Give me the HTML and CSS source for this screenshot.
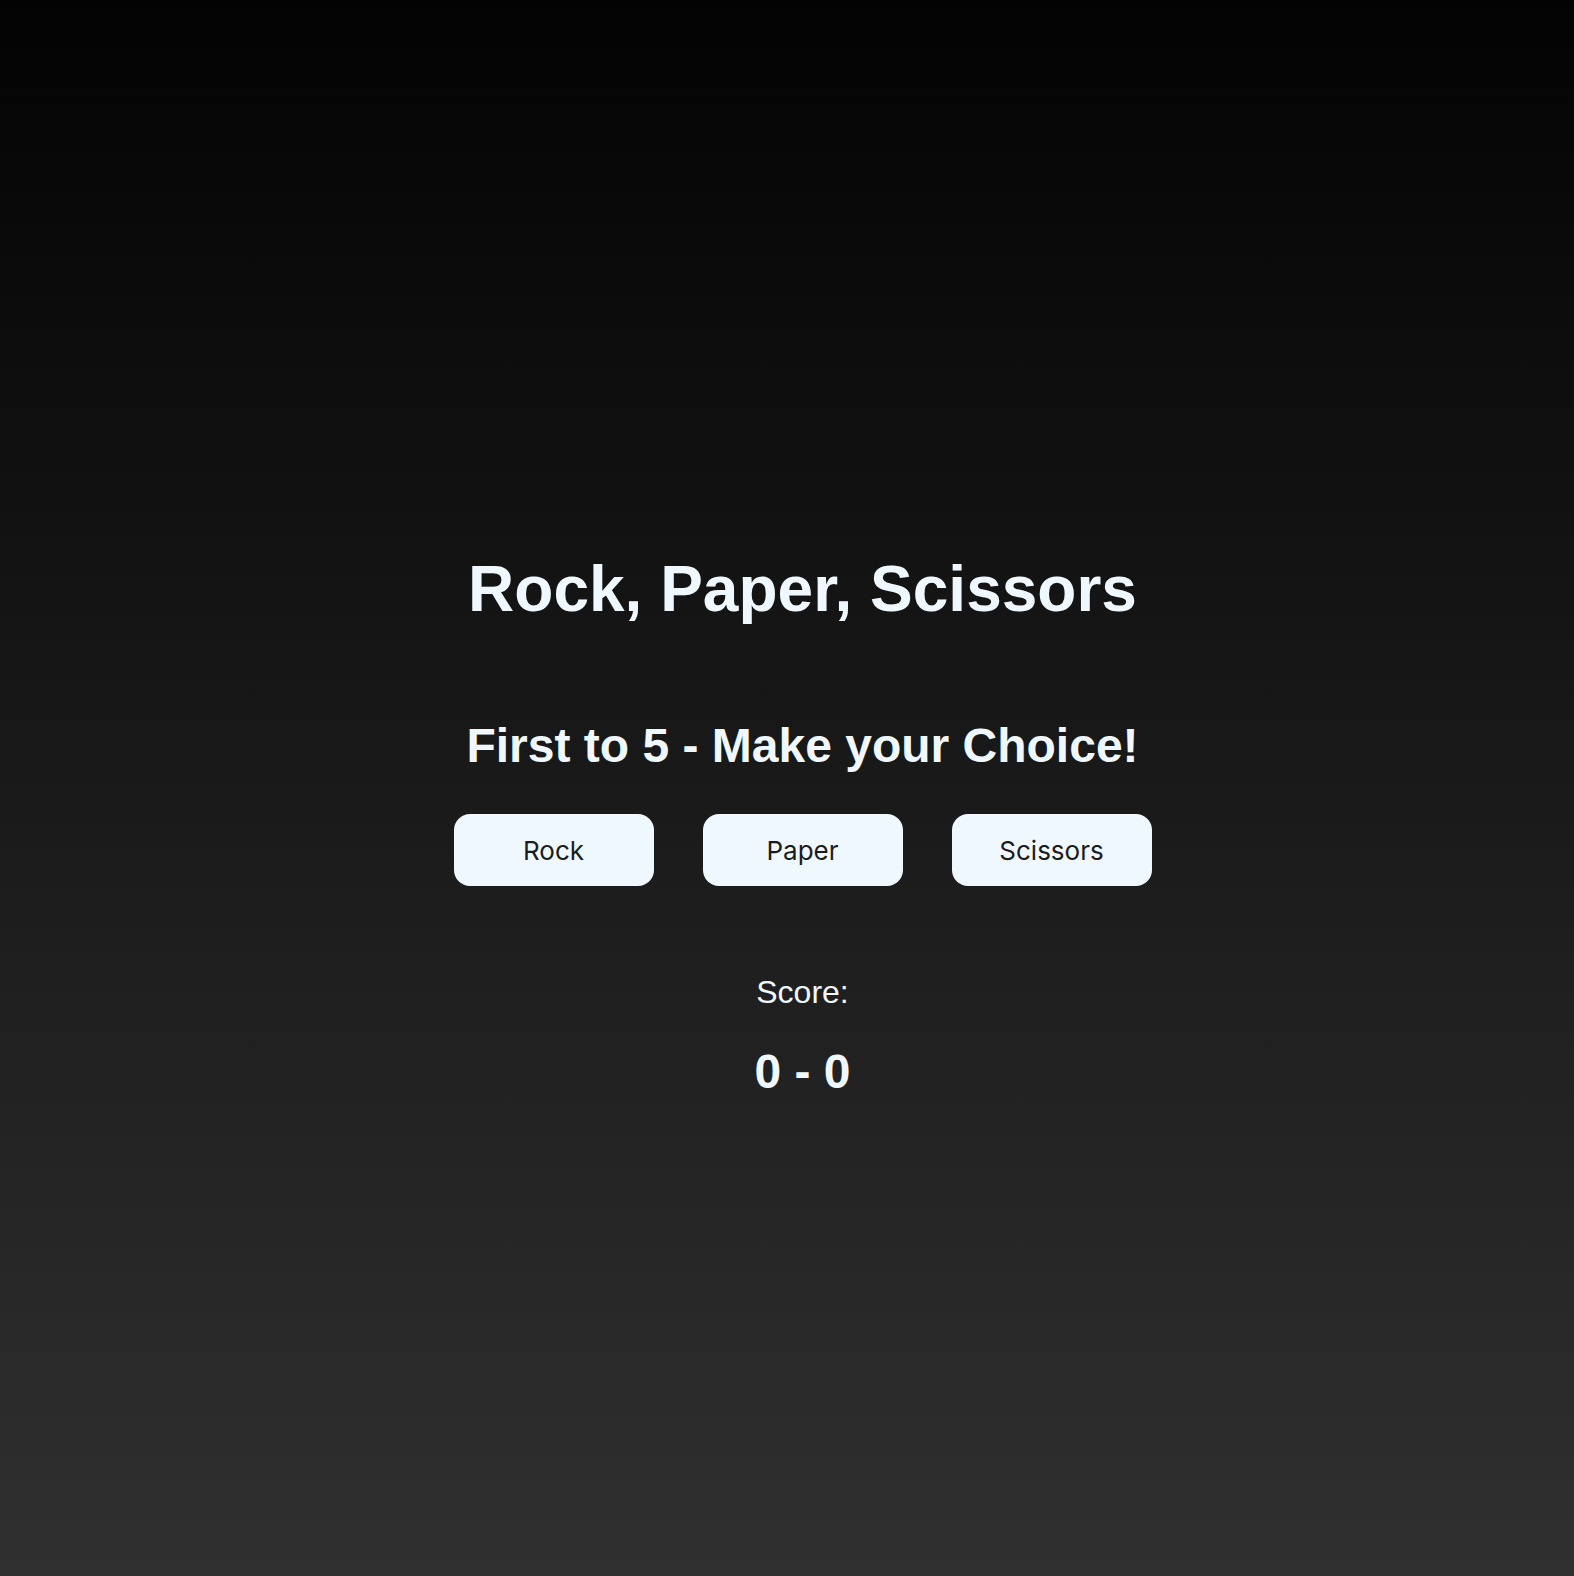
FILE: index.html
```html
<!DOCTYPE html>
<html lang="en">
<head>
<meta charset="utf-8">
<title>Rock, Paper, Scissors</title>
<link rel="stylesheet" href="styles.css">
</head>
<body>
<main class="game">
  <h1 class="title">Rock, Paper, Scissors</h1>
  <h2 class="prompt">First to 5 - Make your Choice!</h2>
  <div class="choices">
    <button class="choice">Rock</button>
    <button class="choice">Paper</button>
    <button class="choice">Scissors</button>
  </div>
  <p class="score-label">Score:</p>
  <p class="score">0 - 0</p>
</main>
</body>
</html>
```
FILE: styles.css
```css
html, body {
  margin: 0;
  padding: 0;
}
body {
  min-height: 1576px;
  background: linear-gradient(to bottom, #030303 0%, #303030 100%);
  font-family: "Liberation Sans", Arial, Helvetica, sans-serif;
  color: #f0f8ff;
}
.game {
  display: flex;
  flex-direction: column;
  align-items: center;
  padding-top: 552px;
  padding-left: 31px;
}
.title {
  margin: 0;
  font-size: 64px;
  font-weight: 700;
  line-height: normal;
}
.prompt {
  margin: 92px 0 0;
  font-size: 48px;
  font-weight: 700;
  line-height: normal;
}
.choices {
  display: flex;
  gap: 49px;
  margin-top: 41px;
}
.choice {
  width: 200px;
  height: 72px;
  border: none;
  border-radius: 16px;
  background: #f0f8ff;
  color: #1c1c1c;
  font-family: Inter, "Noto Sans", sans-serif;
  font-size: 26px;
  cursor: pointer;
}
.score-label {
  margin: 88px 0 0;
  font-size: 32px;
  line-height: normal;
}
.score {
  margin: 33px 0 0;
  font-size: 48px;
  font-weight: 700;
  line-height: normal;
}
```
